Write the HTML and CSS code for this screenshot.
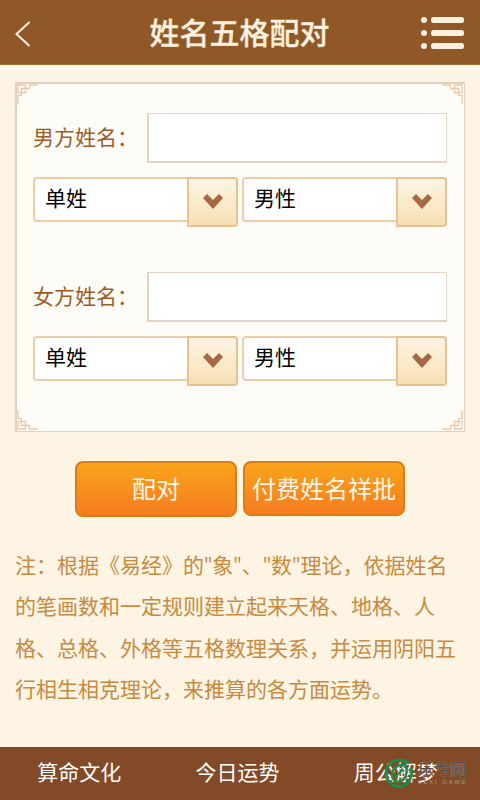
FILE: index.html
```html
<!DOCTYPE html>
<html lang="zh-CN">
<head>
<meta charset="utf-8"/>
<meta name="viewport" content="width=device-width, initial-scale=1"/>
<title>姓名五格配对</title>
<link rel="stylesheet" href="styles.css">
</head>
<body>
<svg class="defs" width="0" height="0">
  <symbol id="corner" viewBox="0 0 21 20">
    <path d="M1 1H8.5V8.5H1ZM21 1H12.5V4.5H4.5V11.5H1V20" fill="none" stroke="currentColor" stroke-width="1.3"/>
  </symbol>
  <symbol id="arrow" viewBox="0 0 20 15">
    <path d="M0 4L4 0L10 6L16 0L20 4L10 15Z" fill="currentColor"/>
  </symbol>
</svg>

<header class="header">
  <a class="back"><svg width="16" height="26" viewBox="0 0 16 26"><path d="M14.5 1L1.5 13L14.5 25" fill="none" stroke="currentColor" stroke-width="2"/></svg></a>
  <h1>姓名五格配对</h1>
  <a class="menu"><svg width="43" height="32" viewBox="0 0 43 32" fill="currentColor">
    <circle cx="3" cy="3" r="3"/><rect x="10" y="0" width="33" height="6" rx="2.5"/>
    <circle cx="3" cy="16" r="3"/><rect x="10" y="13" width="33" height="6" rx="2.5"/>
    <circle cx="3" cy="29" r="3"/><rect x="10" y="26" width="33" height="6" rx="2.5"/>
  </svg></a>
</header>

<main class="main">
  <div class="panel">
    <svg class="corner tl"><use href="#corner"/></svg>
    <svg class="corner tr"><use href="#corner"/></svg>
    <svg class="corner bl"><use href="#corner"/></svg>
    <svg class="corner br"><use href="#corner"/></svg>

    <div class="group">
      <div class="row">
        <label for="male-name">男方姓名：</label>
        <input id="male-name" type="text"/>
      </div>
      <div class="selects">
        <div class="select"><span class="value">单姓</span><span class="drop"><svg><use href="#arrow"/></svg></span></div>
        <div class="select"><span class="value">男性</span><span class="drop"><svg><use href="#arrow"/></svg></span></div>
      </div>
    </div>

    <div class="group">
      <div class="row">
        <label for="female-name">女方姓名：</label>
        <input id="female-name" type="text"/>
      </div>
      <div class="selects">
        <div class="select"><span class="value">单姓</span><span class="drop"><svg><use href="#arrow"/></svg></span></div>
        <div class="select"><span class="value">男性</span><span class="drop"><svg><use href="#arrow"/></svg></span></div>
      </div>
    </div>
  </div>

  <div class="buttons">
    <button class="btn btn-match">配对</button>
    <button class="btn">付费姓名祥批</button>
  </div>

  <p class="note">注：根据《易经》的"象"、"数"理论，依据姓名的笔画数和一定规则建立起来天格、地格、人格、总格、外格等五格数理关系，并运用阴阳五行相生相克理论，来推算的各方面运势。</p>
</main>

<footer class="footer">
  <a>算命文化</a>
  <a>今日运势</a>
  <a>周公解梦</a>
  <div class="brand">
    <svg width="30" height="30" viewBox="0 0 30 30" fill="none" stroke="#16904a" stroke-linecap="round">
      <path d="M24 4.5C18 0 8 1 3.5 9C-1 18 5 28 15 28.5C24 28 29 20 27.5 11" stroke-width="2.8"/>
      <path d="M22 8C15 5 8 10 8 17C8 22 12 25 17 23C22 21 24 14 22 8Z" stroke-width="2.4"/>
      <path d="M12 19C12 15 18 16 18 11" stroke-width="2"/>
    </svg>
    <div class="brand-text">
      <span class="brand-name">乐兮网</span>
      <span class="brand-en">LEXI GAME</span>
    </div>
  </div>
</footer>
</body>
</html>
```
FILE: styles.css
```css
* { box-sizing: border-box; }
html, body { height: 100%; margin: 0; }
body {
  display: flex; flex-direction: column;
  background: #fdf4e4;
  font-family: "Noto Sans CJK SC", sans-serif;
  font-size: 21px;
}
.defs { position: absolute; }

.header {
  display: flex; align-items: center; justify-content: space-between;
  height: 65px; padding: 0 16px 0 15px;
  background: #905827; color: #fdf0df;
  border-bottom: 1px solid #a26d35;
}
.header a { display: flex; width: 43px; }
.header .back { padding-top: 4px; }
.header .menu { padding-top: 1px; }
.header h1 { margin: 0 0 2px; font-size: 30px; line-height: 44px; font-weight: 500; -webkit-text-stroke: 0.3px; }

.main { flex: 1; padding: 17px 15px 0; }
.panel {
  position: relative;
  height: 350px; padding: 29px 17px 0 16px;
  background: #fefcf7;
  border: 2px solid #e2cfc0;
  border-right-width: 1px;
  border-bottom-width: 1px;
}
.corner { position: absolute; width: 21px; height: 20px; color: #e9c9a8; }
.tl { left: 0; top: 0; }
.tr { right: 1px; top: 0; transform: scaleX(-1); }
.bl { left: 0; bottom: 1px; transform: scaleY(-1); }
.br { right: 1px; bottom: 1px; transform: scale(-1); }

.group { height: 159px; }
.row { display: flex; align-items: center; justify-content: space-between; color: #9c5c28; }
.row label { line-height: 30px; padding-bottom: 5px; }
.row input {
  width: 300px; height: 50px;
  background: #fff; border: 2px solid #e6d3c6; border-right-width: 1px; border-top-width: 1px;
}
.selects { display: flex; justify-content: space-between; margin-top: 14px; }
.select {
  display: flex; width: 205px; height: 45px;
  background: #fff; border: 2px solid #efcda6; border-radius: 4px;
  color: #000;
}
.value { flex: 1; padding-left: 10px; line-height: 36px; }
.drop {
  display: flex; justify-content: center;
  width: 51px; height: 50px; margin: -2px -2px 0 0; padding-top: 15px;
  background: linear-gradient(#fef5e4, #f7dfb4);
  border: 2px solid #eac292; border-radius: 0 4px 4px 0;
  color: #a76846;
}
.drop svg { width: 20px; height: 15px; }

.buttons { display: flex; justify-content: center; gap: 6px; padding-top: 29px; height: 85px; }
.btn {
  width: 162px; height: 55px; padding: 0 0 2px;
  font: 24px/36px "Noto Sans CJK SC", sans-serif; color: #fff5e6;
  background: linear-gradient(#f9a41b, #f57c20);
  border: 2px solid #dc7c12; border-radius: 8px;
}
.btn-match { height: 56px; padding-bottom: 3px; }
.note { margin: 28px 0 0; font-family: "Open Sans", "Noto Sans CJK SC", sans-serif; line-height: 41.3px; color: #c78a40; }

.footer {
  position: relative;
  display: flex; height: 53px; padding-right: 5px;
  background: #834a28; color: #fff;
}
.footer a { flex: 1; text-align: center; line-height: 48px; }
/* the brand mark lies over the last link */
.brand {
  position: absolute; left: 384px; top: 11px;
  display: flex; gap: 4px;
}
.brand-text { display: flex; flex-direction: column; width: 52px; white-space: nowrap; }
.brand-name { font-size: 16px; line-height: 21px; color: #4f4b48; text-shadow: 0 0 1px #c9b8a8; }
.brand-en { font: 6px/7px "Liberation Sans", sans-serif; letter-spacing: 1.9px; color: #ab9484; }
```
